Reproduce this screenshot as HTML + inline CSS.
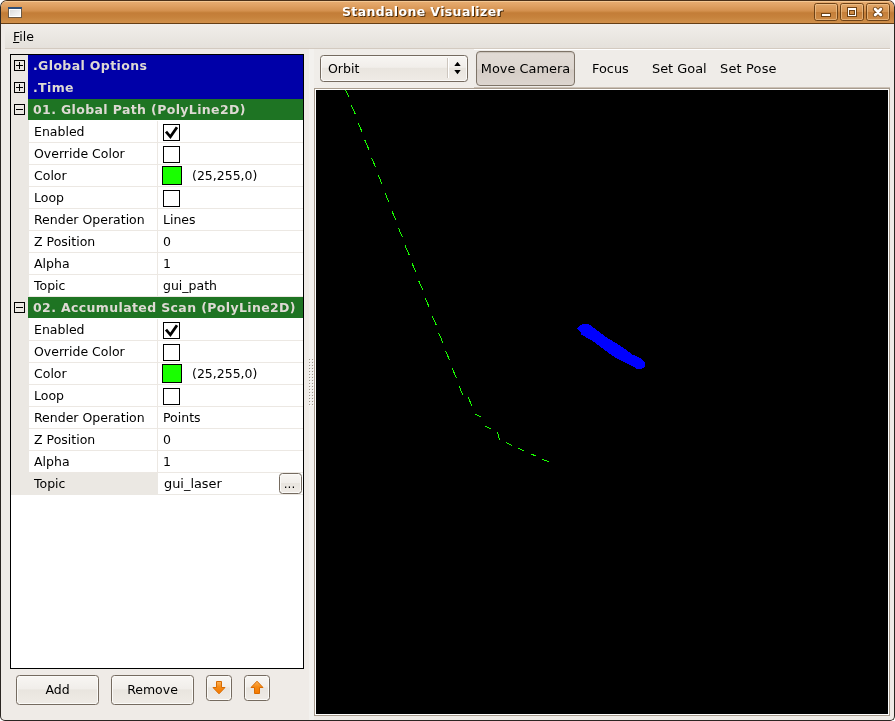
<!DOCTYPE html>
<html><head><meta charset="utf-8"><title>Standalone Visualizer</title>
<style>
html,body{margin:0;padding:0;background:#fff;}
body{width:895px;height:721px;position:relative;overflow:hidden;font-family:"DejaVu Sans","Liberation Sans",sans-serif;font-size:12.5px;color:#000;-webkit-font-smoothing:antialiased;}
div{box-sizing:border-box;}
.a{position:absolute;}
#win{position:absolute;left:0;top:0;width:895px;height:721px;border:1px solid #2b2622;border-top-color:#4a3018;border-radius:7px 7px 5px 5px;background:#efebe7;overflow:hidden;}
#in{position:absolute;left:-1px;top:-1px;width:895px;height:721px;will-change:transform;}
#title{left:1px;top:1px;width:893px;height:23px;border-bottom:1px solid #653e15;background:linear-gradient(#f4c792 0px,#f4c792 1px,#e6ab6f 1px,#dfa061 5px,#d3904e 10px,#c9853f 11px,#c37d38 12px,#c6823c 16px,#d0904b 22px);}
#title .t{position:absolute;left:0;width:843px;top:3px;text-align:center;font-weight:bold;font-size:12.5px;letter-spacing:.37px;color:#fff;text-shadow:1px 1px 0 #4a2c0c;}
.tb{position:absolute;top:2px;width:24px;height:18px;border:1px solid #7b4a1e;border-radius:3px;background:linear-gradient(#e0a366 0,#d4914f 8px,#c27d3a 9px,#cd8a45 16px);box-shadow:inset 0 0 0 1px rgba(255,220,170,.35);}
#menu{left:5px;top:24px;width:885px;height:25px;background:linear-gradient(#f1eeea,#e5e1db);border-bottom:1px solid #d3cac0;}
#menu span{position:absolute;left:8px;top:5px;}
#tree{left:10px;top:54px;width:294px;height:615px;border:1px solid #000;background:#fff;overflow:hidden;}
.marg{left:0;top:0;width:18px;height:440px;background:#ebe8e3;}
.cat{left:17px;width:275px;height:22px;color:#dedad4;font-weight:bold;font-size:12.5px;letter-spacing:.37px;padding:3px 0 0 5px;white-space:nowrap;}
.blue{background:#0000a8;}
.green{background:#1e7423;}
.pr{left:18px;width:274px;height:22px;border-bottom:1px solid #ece8e3;}
.pr .l{position:absolute;left:5px;top:3px;white-space:nowrap;}
.pr .v{position:absolute;left:134px;top:3px;white-space:nowrap;}
.pr .sp{position:absolute;left:128px;top:0;width:1px;height:22px;background:#ece8e3;}
.cb{position:absolute;left:134px;top:3px;width:17px;height:17px;border:1px solid #000;background:#fff;}
.sw{position:absolute;left:133px;top:1px;width:20px;height:19px;border:1px solid #000;background:#19ff00;}
.exp{left:3px;width:11px;height:11px;border:1px solid #000;background:#ebe8e3;}
.exp i{position:absolute;left:1px;top:4px;width:7px;height:1px;background:#000;}
.exp b{position:absolute;left:4px;top:1px;width:1px;height:7px;background:#000;}
.btn{border:1px solid #756b60;border-radius:3.5px;background:linear-gradient(#f8f6f3 0,#f1eeea 45%,#e9e5df 50%,#efebe6 100%);text-align:center;box-shadow:inset 0 0 0 1px #fbfaf8;}
</style></head><body>
<div id="win"><div id="in">
 <div id="title" class="a"><div class="t">Standalone Visualizer</div>
  <svg class="a" style="left:7px;top:6px" width="14" height="11" viewBox="0 0 14 11"><defs><linearGradient id="ig" x1="0" y1="0" x2="1" y2="1"><stop offset="0" stop-color="#dcdcdc"/><stop offset="1" stop-color="#f8f8f8"/></linearGradient></defs><rect width="14" height="11" fill="#6d5a45"/><rect width="14" height="2" fill="#2f4f78"/><rect x="1" y="2" width="12" height="8" fill="#fff"/><rect x="2" y="3" width="10" height="6" fill="url(#ig)"/></svg>
  <svg width="0" height="0" style="position:absolute"><defs><linearGradient id="tbg" x1="0" y1="0" x2="0" y2="1"><stop offset="0" stop-color="#e3a86b"/><stop offset=".48" stop-color="#d4924f"/><stop offset=".52" stop-color="#c47e39"/><stop offset="1" stop-color="#cf8c47"/></linearGradient></defs></svg>
  <svg class="a" style="left:813px;top:2px" width="24" height="18" viewBox="0 0 24 18"><rect x=".5" y=".5" width="23" height="17" rx="2.2" fill="url(#tbg)" stroke="#6e4216"/><rect x="1.5" y="1.5" width="21" height="15" rx="1.2" fill="none" stroke="#f5cf9f" stroke-opacity=".55"/><rect x="7" y="10" width="10" height="4" fill="#6e4216"/><rect x="8" y="11" width="8" height="2" fill="#fff"/></svg>
  <svg class="a" style="left:839px;top:2px" width="24" height="18" viewBox="0 0 24 18"><rect x=".5" y=".5" width="23" height="17" rx="2.2" fill="url(#tbg)" stroke="#6e4216"/><rect x="1.5" y="1.5" width="21" height="15" rx="1.2" fill="none" stroke="#f5cf9f" stroke-opacity=".55"/><rect x="7" y="4" width="10" height="10" fill="#6e4216"/><rect x="8" y="5" width="8" height="8" fill="#fff"/><rect x="9" y="7" width="6" height="5" fill="#6e4216"/><rect x="10" y="8" width="4" height="3" fill="#cd8a45"/></svg>
  <svg class="a" style="left:865px;top:2px" width="24" height="18" viewBox="0 0 24 18"><rect x=".5" y=".5" width="23" height="17" rx="2.2" fill="url(#tbg)" stroke="#6e4216"/><rect x="1.5" y="1.5" width="21" height="15" rx="1.2" fill="none" stroke="#f5cf9f" stroke-opacity=".55"/><path d="M9.1 6.1 L14.9 11.9 M14.9 6.1 L9.1 11.9" stroke="#6e4216" stroke-width="4.6" stroke-linecap="round"/><path d="M9.1 6.1 L14.9 11.9 M14.9 6.1 L9.1 11.9" stroke="#fff" stroke-width="2.8" stroke-linecap="round"/></svg>
 </div>
 <div id="menu" class="a"><span><u>F</u>ile</span></div>

 <div id="tree" class="a">
  <div class="a marg"></div>
  <div class="a cat blue" style="top:0">.Global Options</div>
  <div class="a cat blue" style="top:22px">.Time</div>
  <div class="a cat green" style="top:44px;height:21px">01. Global Path (PolyLine2D)</div>
  <div class="a pr" style="top:66px"><span class="l">Enabled</span><div class="sp"></div><div class="cb"><svg width="15" height="15" viewBox="0 0 15 15" style="position:absolute;left:0;top:0"><path d="M2 6.7 L6.4 11.8 L13 2.2" stroke="#000" stroke-width="2.8" fill="none"/></svg></div></div>
  <div class="a pr" style="top:88px"><span class="l">Override Color</span><div class="sp"></div><div class="cb"></div></div>
  <div class="a pr" style="top:110px"><span class="l">Color</span><div class="sp"></div><div class="sw"></div><span class="v" style="left:163px">(25,255,0)</span></div>
  <div class="a pr" style="top:132px"><span class="l">Loop</span><div class="sp"></div><div class="cb"></div></div>
  <div class="a pr" style="top:154px"><span class="l">Render Operation</span><div class="sp"></div><span class="v">Lines</span></div>
  <div class="a pr" style="top:176px"><span class="l">Z Position</span><div class="sp"></div><span class="v">0</span></div>
  <div class="a pr" style="top:198px"><span class="l">Alpha</span><div class="sp"></div><span class="v">1</span></div>
  <div class="a pr" style="top:220px"><span class="l">Topic</span><div class="sp"></div><span class="v">gui_path</span></div>
  <div class="a cat green" style="top:242px;height:21px">02. Accumulated Scan (PolyLine2D)</div>
  <div class="a pr" style="top:264px"><span class="l">Enabled</span><div class="sp"></div><div class="cb"><svg width="15" height="15" viewBox="0 0 15 15" style="position:absolute;left:0;top:0"><path d="M2 6.7 L6.4 11.8 L13 2.2" stroke="#000" stroke-width="2.8" fill="none"/></svg></div></div>
  <div class="a pr" style="top:286px"><span class="l">Override Color</span><div class="sp"></div><div class="cb"></div></div>
  <div class="a pr" style="top:308px"><span class="l">Color</span><div class="sp"></div><div class="sw"></div><span class="v" style="left:163px">(25,255,0)</span></div>
  <div class="a pr" style="top:330px"><span class="l">Loop</span><div class="sp"></div><div class="cb"></div></div>
  <div class="a pr" style="top:352px"><span class="l">Render Operation</span><div class="sp"></div><span class="v">Points</span></div>
  <div class="a pr" style="top:374px"><span class="l">Z Position</span><div class="sp"></div><span class="v">0</span></div>
  <div class="a pr" style="top:396px"><span class="l">Alpha</span><div class="sp"></div><span class="v">1</span></div>
  <div class="a pr" style="top:418px;border-bottom-color:#ebe8e3"><div class="a" style="left:0;top:0;width:129px;height:22px;background:#ebe8e3"></div><span class="l">Topic</span><span class="v" style="left:135px;font-size:12.9px">gui_laser</span>
    <div class="a btn" style="left:250px;top:0;width:23px;height:21px;line-height:20px;font-size:12px;text-indent:-2px">...</div></div>
  <div class="a exp" style="top:5px"><i></i><b></b></div>
  <div class="a exp" style="top:27px"><i></i><b></b></div>
  <div class="a exp" style="top:49px"><i></i></div>
  <div class="a exp" style="top:247px"><i></i></div>
 </div>

 <div class="a btn" style="left:16px;top:675px;width:83px;height:30px;line-height:28px">Add</div>
 <div class="a btn" style="left:111px;top:675px;width:83px;height:30px;line-height:28px">Remove</div>
 <div class="a btn" style="left:206px;top:675px;width:26px;height:26px"><svg class="a" style="left:-1px;top:-1px" width="26" height="26" viewBox="0 0 26 26"><defs><linearGradient id="og1" x1="0" y1="0" x2="0" y2="1"><stop offset="0" stop-color="#fcb45a"/><stop offset=".45" stop-color="#f68a14"/><stop offset="1" stop-color="#f57900"/></linearGradient></defs><path d="M10.5 6.5 H15.5 V12.5 H19 L13 18.8 L7 12.5 H10.5 Z" fill="url(#og1)" stroke="#d86a00" stroke-width="1" stroke-linejoin="round"/></svg></div>
 <div class="a btn" style="left:244px;top:675px;width:26px;height:26px"><svg class="a" style="left:-1px;top:-1px" width="26" height="26" viewBox="0 0 26 26"><defs><linearGradient id="og2" x1="0" y1="0" x2="0" y2="1"><stop offset="0" stop-color="#fcb45a"/><stop offset=".45" stop-color="#f68a14"/><stop offset="1" stop-color="#f57900"/></linearGradient></defs><path d="M10.5 18.5 H15.5 V12.5 H19 L13 6.2 L7 12.5 H10.5 Z" fill="url(#og2)" stroke="#d86a00" stroke-width="1" stroke-linejoin="round"/></svg></div>

 <!-- sash grip -->
 <div class="a" style="left:309px;top:49px;width:5px;height:671px;background:#f3f1ee"></div>
 <svg class="a" style="left:308px;top:358px" width="6" height="48"><defs><pattern id="g" width="3" height="3" patternUnits="userSpaceOnUse"><rect x="1" y="1" width="1" height="1" fill="#9c948b"/><rect x="2" y="2" width="1" height="1" fill="#fff"/></pattern></defs><rect width="6" height="48" fill="url(#g)"/></svg>

 <!-- right pane -->
 <div class="a" style="left:314px;top:49px;width:576px;height:39px;background:#f0ede9"></div>
 <div class="a" style="left:474px;top:49px;width:416px;height:39px;border-top:1px solid #fff;border-bottom:1px solid #cbc1b6;background:#efece8"></div>
 <div class="a btn" style="left:320px;top:55px;width:148px;height:27px;text-align:left;padding:5px 0 0 7px">Orbit
   <div class="a" style="left:126px;top:2px;width:2px;height:20px;background:#fff;border-left:1px solid #cdc6be"></div>
   <svg class="a" style="left:133px;top:6px" width="7" height="13" viewBox="0 0 7 13"><path d="M0.3 4 L3.5 -0.2 L6.7 4 Z M0.3 8 L3.5 12.2 L6.7 8 Z" fill="#000"/></svg>
 </div>
 <div class="a" style="left:476px;top:51px;width:99px;height:35px;border:1px solid #7e7468;border-radius:4px;background:linear-gradient(#e2dcd6 0,#ddd6d0 50%,#d5cdc6 56%,#dcd5cf 100%);text-align:center;padding-top:9px;font-size:12.9px;box-shadow:inset 0 1px 1px #c9c1b9">Move Camera</div>
 <div class="a" style="left:592px;top:61px;font-size:12.9px">Focus</div>
 <div class="a" style="left:652px;top:61px;font-size:12.9px">Set Goal</div>
 <div class="a" style="left:720px;top:61px;font-size:12.9px;letter-spacing:.2px">Set Pose</div>

 <div class="a" style="left:314px;top:88px;width:576px;height:628px;border:1px solid #a89c8e;background:#000;">
  <div class="a" style="left:0;top:0;width:574px;height:626px;border:1px solid #fff;"></div>
  <svg class="a" style="left:1px;top:1px" width="572" height="624" viewBox="316 90 572 624" shape-rendering="crispEdges">
   <path d="M344.8 87.9 L348.5 96.3 M351.5 105.5 L355.2 113.9 M358.2 123.1 L361.9 131.5 M365.0 140.6 L368.7 149.0 M371.7 158.2 L375.4 166.6 M378.4 175.7 L382.1 184.1 M385.1 193.3 L388.8 201.7 M391.9 210.9 L395.6 219.3 M398.6 228.4 L402.3 236.8 M405.3 246.0 L409.0 254.4 M412.1 263.5 L415.8 271.9 M418.8 281.1 L422.5 289.5 M425.5 298.7 L429.2 307.1 M432.3 316.2 L436.0 324.6 M439.0 333.8 L442.7 342.2 M445.7 351.3 L449.4 359.7 M452.4 368.9 L456.1 377.3 M459.2 386.5 L462.9 394.9 M468.5 397.5 L471.5 405.5 M475.5 414.5 L480.5 416.5 M485.5 426.5 L490.5 428.5 M497.5 432.5 L499.5 439.5 M506.5 442.5 L511.5 445.5 M518.5 448.5 L523.5 450.5 M531.5 454.5 L535.5 455.5 M542.5 459.5 L548.5 461.5" stroke="#19ff00" stroke-width="1" fill="none" stroke-linecap="square"/>
   <polygon points="577,328.5 579,326 583.5,324 588.5,324 594,328 607.5,338 620,345.5 632.5,354.5 641.5,359 644.5,362 644.5,367 641,368.8 637,368.8 623.5,361.5 614,356.8 602,348 592,340.5 581,334.5 581,332.5" fill="#0000ff"/>
  </svg>
 </div>
</div></div>
</body></html>
